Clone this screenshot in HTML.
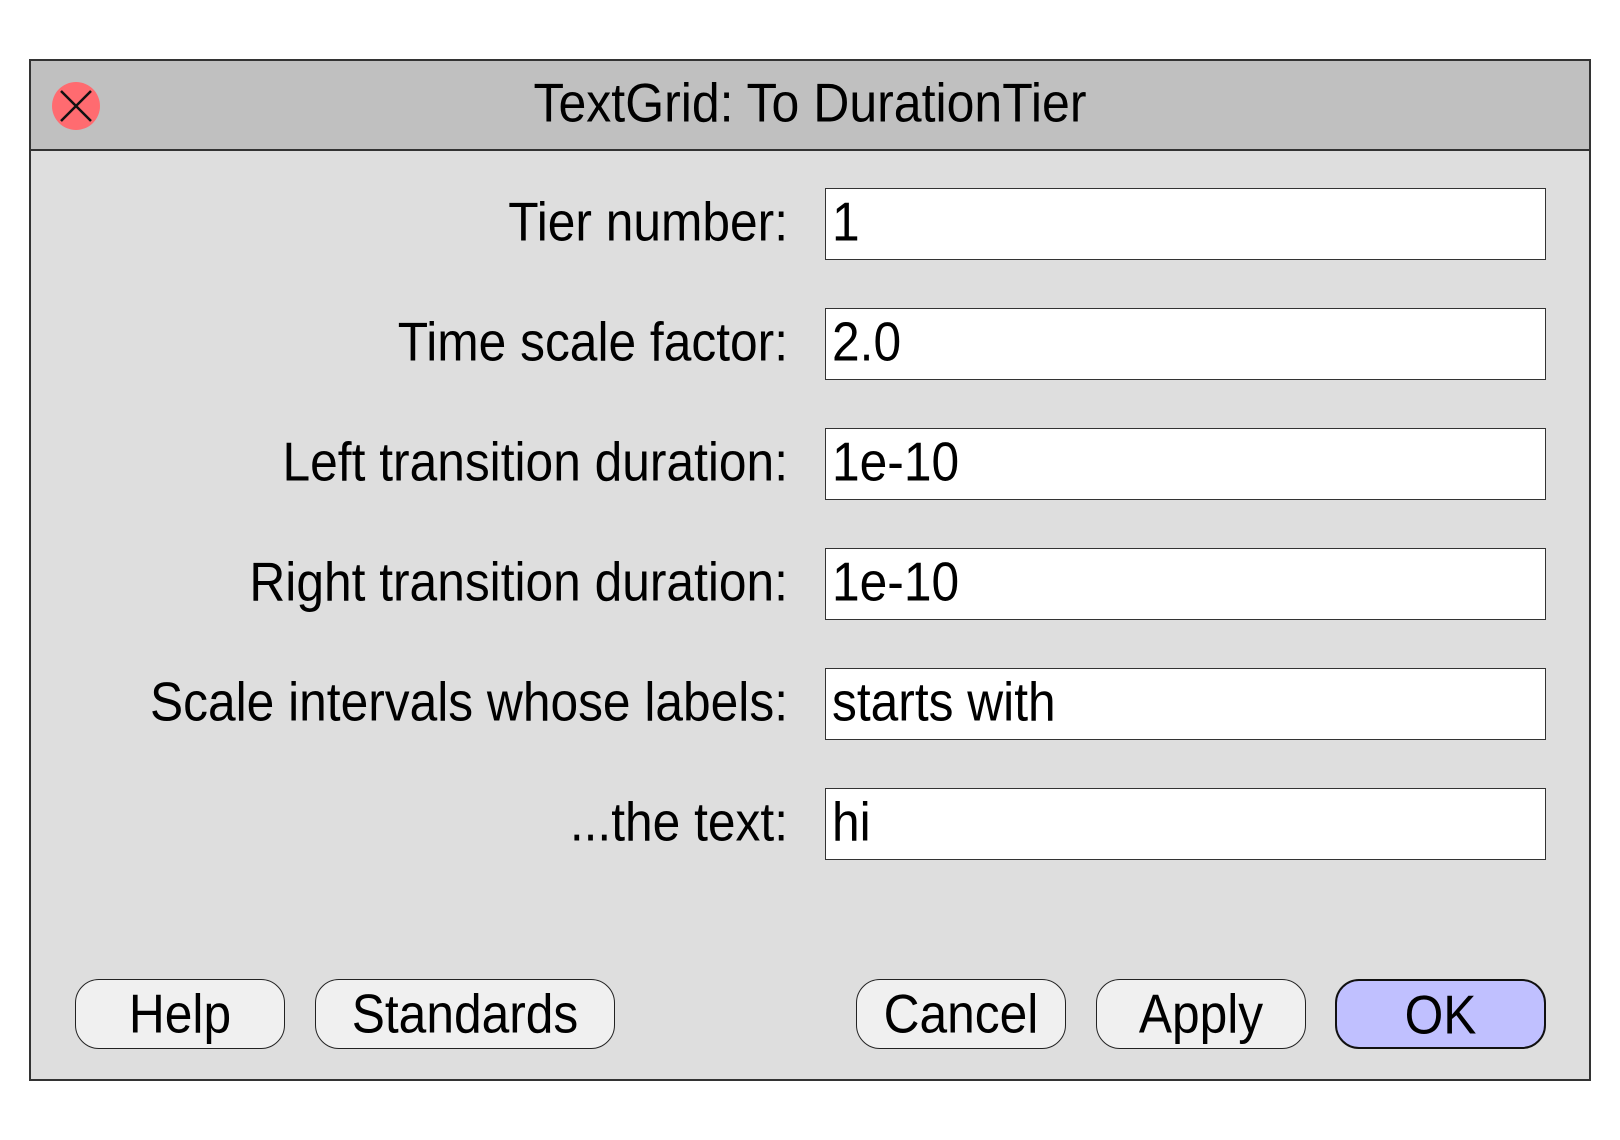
<!DOCTYPE html>
<html><head><meta charset="utf-8"><style>
html,body{margin:0;padding:0;background:#fff;width:1620px;height:1140px;overflow:hidden}
body{font-family:"Liberation Sans",Arial,sans-serif;color:#000;position:relative}
.win{position:absolute;left:29px;top:59px;width:1558px;height:1018px;border:2px solid #333;background:#dedede}
.title{position:absolute;left:0;top:0;width:1558px;height:88px;background:#c0c0c0;border-bottom:2px solid #333}
.title span{position:absolute;left:0;width:100%;top:-2px;height:88px;line-height:88px;text-align:center;font-size:50px;transform:scaleY(1.1)}
.close{position:absolute;left:21px;top:21px;width:48px;height:48px}
.lbl{position:absolute;right:832px;height:73px;line-height:73px;font-size:49.7px;white-space:nowrap;transform:scaleY(1.1)}
.fld{position:absolute;left:825px;width:719px;height:70px;border:1.5px solid #333;background:#fff}
.fld span{position:absolute;left:6px;top:-2px;line-height:70px;font-size:49.7px;transform:scaleY(1.1);transform-origin:left center;display:block}
.btn{position:absolute;top:979px;height:70px;border:1.5px solid #222;border-radius:24px;background:#f0f0f0;text-align:center;line-height:68px;font-size:49.7px;box-sizing:border-box}
.btn span{display:inline-block;transform:scaleY(1.1)}
</style></head><body>
<div class="win">
<div class="title"><span>TextGrid: To DurationTier</span>
<svg class="close" viewBox="0 0 48 48"><circle cx="24" cy="24" r="24" fill="#ff6b70"/><path d="M9 9L39 39M39 9L9 39" stroke="#111" stroke-width="2.5"/></svg>
</div>
</div>
<div class="lbl" style="top:186px">Tier number:</div>
<div class="lbl" style="top:306px">Time scale factor:</div>
<div class="lbl" style="top:426px">Left transition duration:</div>
<div class="lbl" style="top:546px">Right transition duration:</div>
<div class="lbl" style="top:666px">Scale intervals whose labels:</div>
<div class="lbl" style="top:786px">...the text:</div>
<div class="fld" style="top:188px"><span>1</span></div>
<div class="fld" style="top:308px"><span>2.0</span></div>
<div class="fld" style="top:428px"><span>1e-10</span></div>
<div class="fld" style="top:548px"><span>1e-10</span></div>
<div class="fld" style="top:668px"><span>starts with</span></div>
<div class="fld" style="top:788px"><span>hi</span></div>
<div class="btn" style="left:75px;width:210px"><span>Help</span></div>
<div class="btn" style="left:315px;width:300px"><span>Standards</span></div>
<div class="btn" style="left:856px;width:210px"><span>Cancel</span></div>
<div class="btn" style="left:1096px;width:210px"><span>Apply</span></div>
<div class="btn" style="left:1335px;width:211px;background:#c0c0ff;border:2.5px solid #111"><span>OK</span></div>
</body></html>
